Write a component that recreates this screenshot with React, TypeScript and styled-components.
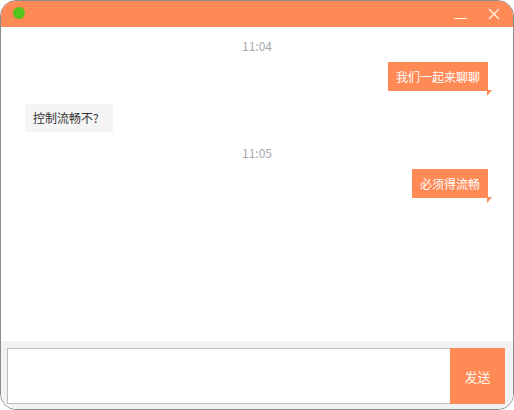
import styled, { createGlobalStyle } from "styled-components";

const GlobalStyle = createGlobalStyle`
  html, body {
    margin: 0;
    padding: 0;
    background: #ffffff;
  }
  * {
    box-sizing: border-box;
  }
`;

const Window = styled.div`
  width: 514px;
  height: 410px;
  border: 1px solid #8c8c8c;
  border-radius: 16px;
  overflow: hidden;
  display: flex;
  flex-direction: column;
  background: #ffffff;
  font-family: "Microsoft YaHei", "Noto Sans CJK SC", "Noto Sans", sans-serif;
  font-size: 12px;
`;

const TitleBar = styled.header`
  height: 26px;
  flex-shrink: 0;
  background: #ff8a56;
  display: flex;
  align-items: center;
  padding: 0 8px 0 12px;
`;

const Dot = styled.span`
  width: 12px;
  height: 12px;
  border-radius: 50%;
  background: #52c41a;
  margin-top: -3px;
`;

const Spacer = styled.div`
  flex: 1;
`;

const TitleButton = styled.button`
  width: 22px;
  height: 22px;
  padding: 0;
  border: none;
  background: transparent;
  display: flex;
  align-items: center;
  justify-content: center;
  margin-left: 12px;
`;

const Messages = styled.main`
  flex: 1;
  display: flex;
  flex-direction: column;
  padding: 10px 24px 0 24px;
`;

const Time = styled.div`
  text-align: center;
  color: #a8a8a8;
  font-size: 12px;
  line-height: 17px;
  margin-bottom: 8px;
`;

const Row = styled.div<{ $mine?: boolean }>`
  display: flex;
  justify-content: ${(p) => (p.$mine ? "flex-end" : "flex-start")};
  margin-bottom: ${(p) => (p.$mine ? "13px" : "12px")};
`;

const Bubble = styled.div<{ $mine?: boolean }>`
  position: relative;
  padding: ${(p) => (p.$mine ? "0 8px" : "0 14px 0 8px")};
  height: ${(p) => (p.$mine ? "29px" : "28px")};
  line-height: ${(p) => (p.$mine ? "29px" : "28px")};
  font-size: 12px;
  background: ${(p) => (p.$mine ? "#ff8a56" : "#f5f5f5")};
  color: ${(p) => (p.$mine ? "#ffffff" : "#333333")};
  margin-right: ${(p) => (p.$mine ? "1px" : "0")};

  ${(p) =>
    p.$mine &&
    `
    &::after {
      content: "";
      position: absolute;
      right: -4px;
      bottom: -5px;
      width: 0;
      height: 0;
      border-top: 6px solid #ff8a56;
      border-right: 5px solid transparent;
    }
  `}
`;

const Footer = styled.footer`
  height: 68px;
  flex-shrink: 0;
  background: #f2f2f2;
  display: flex;
  padding: 7px 8px 5px 6px;
`;

const Input = styled.textarea`
  flex: 1;
  border: 1px solid #bdbdbd;
  border-right: none;
  background: #ffffff;
  resize: none;
  outline: none;
  font-family: inherit;
`;

const SendButton = styled.button`
  width: 55px;
  border: none;
  background: #ff8a56;
  color: #fff7ee;
  font-family: inherit;
  font-size: 13px;
  padding: 0;
`;

export default function App() {
  return (
    <>
      <GlobalStyle />
      <Window>
        <TitleBar>
          <Dot />
          <Spacer />
          <TitleButton aria-label="minimize">
            <svg width="13" height="13" viewBox="0 0 13 13">
              <line x1="0" y1="10.5" x2="13" y2="10.5" stroke="#fff3e8" strokeWidth="1.2" />
            </svg>
          </TitleButton>
          <TitleButton aria-label="close">
            <svg width="12" height="12" viewBox="0 0 12 12">
              <path d="M1 1 L11 11 M11 1 L1 11" stroke="#fff3e8" strokeWidth="1.2" />
            </svg>
          </TitleButton>
        </TitleBar>
        <Messages>
          <Time>11:04</Time>
          <Row $mine>
            <Bubble $mine>我们一起来聊聊</Bubble>
          </Row>
          <Row>
            <Bubble>控制流畅不?</Bubble>
          </Row>
          <Time>11:05</Time>
          <Row $mine>
            <Bubble $mine>必须得流畅</Bubble>
          </Row>
        </Messages>
        <Footer>
          <Input />
          <SendButton>发送</SendButton>
        </Footer>
      </Window>
    </>
  );
}
